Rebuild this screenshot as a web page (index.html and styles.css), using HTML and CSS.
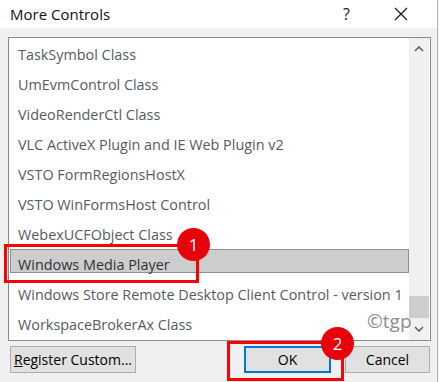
FILE: index.html
```html
<!DOCTYPE html>
<html lang="en">
<head>
  <meta charset="UTF-8">
  <title>More Controls</title>
  <link rel="stylesheet" href="styles.css">
</head>
<body>
  <div class="dialog">
    <header class="titlebar">
      <span class="title">More Controls</span>
      <span class="help">?</span>
      <svg class="close" width="14" height="14" viewBox="0 0 14 14">
        <path d="M1 1 L13 13 M13 1 L1 13" stroke="#111" stroke-width="1.1" fill="none"/>
      </svg>
    </header>

    <div class="listbox">
      <ul class="items">
        <li class="item">TaskSymbol Class</li>
        <li class="item">UmEvmControl Class</li>
        <li class="item">VideoRenderCtl Class</li>
        <li class="item">VLC ActiveX Plugin and IE Web Plugin v2</li>
        <li class="item">VSTO FormRegionsHostX</li>
        <li class="item">VSTO WinFormsHost Control</li>
        <li class="item">WebexUCFObject Class</li>
        <li class="item selected">Windows Media Player</li>
        <li class="item">Windows Store Remote Desktop Client Control - version 1</li>
        <li class="item">WorkspaceBrokerAx Class</li>
      </ul>
      <div class="scrollbar">
        <div class="arrow">
          <svg width="10" height="6" viewBox="0 0 10 6"><path d="M1 5 L5 1 L9 5" stroke="#606060" stroke-width="1.6" fill="none"/></svg>
        </div>
        <div class="track"></div>
        <div class="thumb"></div>
        <div class="arrow">
          <svg width="10" height="6" viewBox="0 0 10 6"><path d="M1 1 L5 5 L9 1" stroke="#606060" stroke-width="1.6" fill="none"/></svg>
        </div>
      </div>
      <span class="watermark">©tgp</span>
    </div>

    <div class="buttons">
      <button class="btn register"><u>R</u>egister Custom...</button>
      <span class="spacer"></span>
      <button class="btn ok">OK</button>
      <button class="btn cancel">Cancel</button>
    </div>

    <!-- callouts -->
    <div class="mark mark-item"></div>
    <div class="badge badge-1">1</div>
    <div class="mark mark-ok"></div>
    <div class="badge badge-2">2</div>
  </div>
  <div class="edge"></div>
</body>
</html>
```

FILE: styles.css
```css
body {
  margin: 0;
  width: 439px;
  height: 382px;
  overflow: hidden;
  display: flex;
  background: #f0f0f0;
  font-family: 'Open Sans', 'Noto Sans', sans-serif;
  color: #000;
}
.dialog {
  position: relative;
  width: 437px;
  height: 382px;
  background: #f0f0f0;
}
.edge {
  width: 1px;
  border-left: 1px solid #b4b4b4;
  background: #f7f7f7;
}
.titlebar {
  height: 28px;
  background: #fff;
  display: flex;
  align-items: center;
}
.title {
  padding-left: 10px;
  font-size: 15px;
  color: #111;
  flex: 1;
}
.help {
  font-size: 16px;
  color: #222;
  margin-right: 44px;
}
.close {
  margin-right: 29px;
}
.listbox {
  position: relative;
  margin: 9px 0 0 8px;
  width: 423px;
  height: 304px;
  box-sizing: border-box;
  border: 1px solid #8a8a8a;
  background: #fff;
  display: flex;
}
.items {
  list-style: none;
  margin: 0;
  padding: 2px 0 0;
  width: 400px;
  overflow: hidden;
}
.item {
  height: 30px;
  line-height: 30px;
  padding-left: 9px;
  font-size: 14.4px;
  color: #555b63;
  white-space: nowrap;
}
.item.selected {
  height: 24px;
  box-sizing: border-box;
  margin: -1px 0 7px 1px;
  padding-left: 7px;
  border: 1px solid #8f8f8f;
  background: #cdcdcd;
  line-height: 30px;
  color: #2e3238;
}
.scrollbar {
  width: 20px;
  background: #f0f0f0;
  display: flex;
  flex-direction: column;
}
.arrow {
  height: 22px;
  display: flex;
  align-items: center;
  justify-content: center;
}
.track {
  flex: 1;
}
.thumb {
  height: 22px;
  background: #cdcdcd;
}
.watermark {
  position: absolute;
  left: 358px;
  top: 270px;
  font-size: 19px;
  color: #8c8c8c;
}
.buttons {
  display: flex;
  margin: 5px 0 0 10px;
  width: 420px;
}
.spacer {
  flex: 1;
}
.btn {
  height: 27px;
  box-sizing: border-box;
  border: 1px solid #adadad;
  background: #e1e1e1;
  font-family: inherit;
  font-size: 14px;
  color: #000;
  padding: 0;
}
.register {
  width: 126px;
}
.ok {
  width: 87px;
  border: 2px solid #0078d7;
}
.cancel {
  width: 85px;
  margin-left: 14px;
}
.mark {
  position: absolute;
  border: 3px solid #f00;
}
.mark-item {
  left: 4px;
  top: 244px;
  width: 189px;
  height: 33px;
}
.mark-ok {
  left: 227px;
  top: 341px;
  width: 111px;
  height: 34px;
}
.badge {
  position: absolute;
  width: 33px;
  height: 33px;
  border-radius: 50%;
  background: #e8000b;
  color: #fff;
  font-size: 17px;
  text-align: center;
  line-height: 33px;
}
.badge-1 {
  left: 177px;
  top: 228px;
}
.badge-2 {
  left: 321px;
  top: 327px;
}
```
